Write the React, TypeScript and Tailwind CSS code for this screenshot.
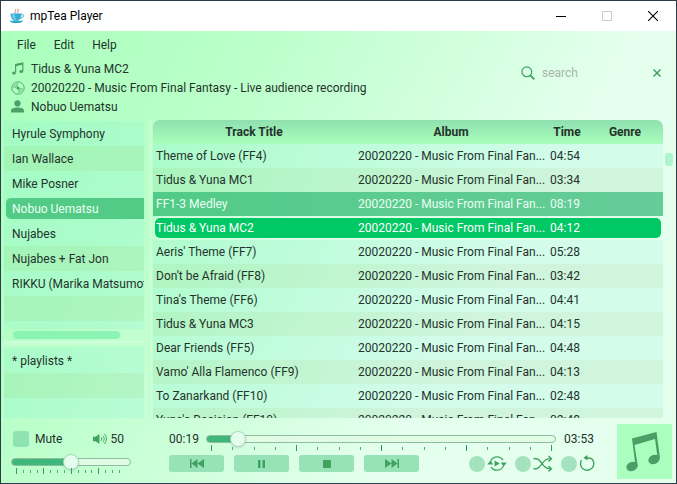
import React from "react";

const artists = [
  "Hyrule Symphony",
  "Ian Wallace",
  "Mike Posner",
  "Nobuo Uematsu",
  "Nujabes",
  "Nujabes + Fat Jon",
  "RIKKU (Marika Matsumoto)",
];

const album = "20020220 - Music From Final Fantasy - Live audience recording";
const shortAlbum = "20020220 - Music From Final Fan...";

const tracks = [
  { title: "Theme of Love (FF4)", time: "04:54" },
  { title: "Tidus & Yuna MC1", time: "03:34" },
  { title: "FF1-3 Medley", time: "08:19" },
  { title: "Tidus & Yuna MC2", time: "04:12" },
  { title: "Aeris' Theme (FF7)", time: "05:28" },
  { title: "Don't be Afraid (FF8)", time: "03:42" },
  { title: "Tina's Theme (FF6)", time: "04:41" },
  { title: "Tidus & Yuna MC3", time: "04:15" },
  { title: "Dear Friends (FF5)", time: "04:48" },
  { title: "Vamo' Alla Flamenco (FF9)", time: "04:13" },
  { title: "To Zanarkand (FF10)", time: "02:48" },
  { title: "Yuna's Decision (FF10)", time: "02:48" },
];

const selected = 2;
const playing = 3;

const light = "bg-[rgba(105,235,220,0.15)]";
const dark = "bg-[rgba(96,190,130,0.16)]";

function NoteIcon() {
  return (
    <svg viewBox="0 0 13 13" className="size-[13px]" fill="none" stroke="currentColor">
      <path d="M4.6 10.6V2.6L11.8 1v8.2" strokeWidth="1.2" />
      <path d="M4.6 3.4 11.8 1.8" strokeWidth="1.6" />
      <ellipse cx="2.9" cy="10.9" rx="1.9" ry="1.5" fill="currentColor" stroke="none" />
      <ellipse cx="10.2" cy="9.5" rx="1.9" ry="1.5" fill="currentColor" stroke="none" />
    </svg>
  );
}

function DiscIcon() {
  return (
    <svg viewBox="0 0 14 14" className="size-3.5" fill="none" stroke="currentColor">
      <circle cx="7" cy="7" r="6.2" strokeWidth="0.9" />
      <circle cx="7" cy="7" r="1.5" fill="currentColor" stroke="none" />
      <path
        d="M2.8 7A4.2 4.2 0 0 1 7 2.8M11.2 7A4.2 4.2 0 0 1 7 11.2M4.6 7A2.4 2.400 0 0 1 7 4.600M9.400 7A2.400 2.400 0 0 1 7 9.400"
        strokeWidth="0.8"
      />
    </svg>
  );
}

function PersonIcon() {
  return (
    <svg viewBox="0 0 13 13" className="size-[13px]" fill="currentColor">
      <circle cx="6.5" cy="3.4" r="3.1" />
      <path d="M0 12.6v-2.2C0 8.7 3 7.6 6.5 7.6S13 8.7 13 10.4v2.2z" />
    </svg>
  );
}

function CupIcon() {
  return (
    <svg viewBox="0 0 16 16" className="h-4 w-4">
      <path d="M6.4 5.4C5 3.8 7.6 3 6.6 1.2M8.8 5.4C7.8 4 10 3.2 8.9 0.8" fill="none" stroke="#c9827a" strokeWidth="1" />
      <path d="M1.6 5.4h11c0 4-1.6 7.4-5.5 7.4S1.6 9.4 1.6 5.4z" fill="#33aed4" />
      <path d="M3 6.4h3c0 2.6.4 4.2 1.5 5.4C4.400 11.6 3.2 9.6 3 6.4z" fill="#79d0e8" />
      <path d="M12.4 6.3c2.8-.6 3.6 3.3-1.2 4" fill="none" stroke="#5fa9b8" strokeWidth="1" />
      <path d="M0.5 12.7h13.8c-1 1.6-3 2.3-6.9 2.3s-5.900-.7-6.900-2.300z" fill="#2fa3cc" />
    </svg>
  );
}

function SpeakerIcon() {
  return (
    <svg viewBox="0 0 14 12" className="h-3 w-3.5" fill="none" stroke="currentColor">
      <path d="M0 3.8h2.6L6.4 1v10L2.6 8.2H0z" fill="currentColor" stroke="none" />
      <path d="M8 4.200c1 1 1 2.600 0 3.600M9.700 2.600c2 2 2 4.800 0 6.800M11.300 1c2.900 2.800 2.900 7.200 0 10" strokeWidth="1" />
    </svg>
  );
}

function Ticks({ count, className }: { count: number; className: string }) {
  return (
    <div className={`flex h-1.5 items-center justify-between ${className}`}>
      {Array.from({ length: count }, (_, i) => (
        <span
          key={i}
          className={i % 4 === 0 ? "h-1.5 w-px bg-[#2f9d5c]" : "h-[3px] w-px bg-[#4fae78]"}
        />
      ))}
    </div>
  );
}

function Slider({ label, value, fill }: { label: string; value: number; fill: number }) {
  return (
    <input
      type="range"
      aria-label={label}
      min={0}
      max={100}
      step="any"
      defaultValue={value}
      style={{
        backgroundImage: `linear-gradient(to right, #3fb67a ${fill}%, #e2fbe4 ${fill}%)`,
      }}
      className="block h-2 w-full appearance-none rounded-full border border-[#8cbf9f] [&::-webkit-slider-thumb]:size-4 [&::-webkit-slider-thumb]:appearance-none [&::-webkit-slider-thumb]:rounded-full [&::-webkit-slider-thumb]:border [&::-webkit-slider-thumb]:border-[#a5dcbc] [&::-webkit-slider-thumb]:bg-[#e4fdec] [&::-webkit-slider-thumb]:shadow-sm"
    />
  );
}

function TransportButton({ label, children }: { label: string; children: React.ReactNode }) {
  return (
    <button
      aria-label={label}
      className="flex h-[17px] w-[55px] items-center justify-center rounded-[3px] bg-[#98e2b8] text-[#3fa35f]"
    >
      {children}
    </button>
  );
}

function Mode({ label, children }: { label: string; children: React.ReactNode }) {
  return (
    <label className="flex items-center gap-0.5 text-[#3fa35f]">
      <input
        type="checkbox"
        aria-label={label}
        className="size-4 appearance-none rounded-full bg-[#a5e3c0]"
      />
      {children}
    </label>
  );
}

function TitleBar() {
  return (
    <header className="flex h-[30px] shrink-0 items-center bg-white pl-2 text-black">
      <CupIcon />
      <span className="flex-1 pl-[5px]">mpTea Player</span>
      <button aria-label="Minimize" className="flex w-[46px] justify-center">
        <svg viewBox="0 0 10 10" className="size-2.5" stroke="#000" shapeRendering="crispEdges">
          <path d="M0 5.5h10" />
        </svg>
      </button>
      <button aria-label="Maximize" className="flex w-[46px] justify-center">
        <svg viewBox="0 0 10 10" className="size-2.5" fill="none" stroke="#c8c8c8">
          <path d="M.5.5h9v9h-9z" />
        </svg>
      </button>
      <button aria-label="Close" className="flex w-[46px] justify-center">
        <svg viewBox="0 0 10 10" className="size-2.5" stroke="#000" strokeWidth="1.1">
          <path d="M0 0l10 10M10 0L0 10" />
        </svg>
      </button>
    </header>
  );
}

function NowPlaying() {
  return (
    <section className="flex shrink-0 items-start justify-between pb-1 pl-2.5 pr-[15px]">
      <ul>
        <li className="flex h-[19px] items-center">
          <span className="flex w-5 text-[#4aa167]"><NoteIcon /></span>
          Tidus &amp; Yuna MC2
        </li>
        <li className="flex h-[19px] items-center">
          <span className="flex w-5 text-[#4aa167]"><DiscIcon /></span>
          {album}
        </li>
        <li className="flex h-[19px] items-center">
          <span className="flex w-5 text-[#4aa167]"><PersonIcon /></span>
          Nobuo Uematsu
        </li>
      </ul>
      <div className="flex h-7 items-center text-[#3fa35f]">
        <svg viewBox="0 0 14 14" className="size-3.5" fill="none" stroke="currentColor">
          <circle cx="5.8" cy="5.8" r="4.9" strokeWidth="1.2" />
          <path d="M9.3 9.3l4 4" strokeWidth="1.8" />
        </svg>
        <input
          aria-label="Search"
          placeholder="search"
          className="ml-[7px] w-[111px] bg-transparent outline-none placeholder:text-[#a9b5ac]"
        />
        <button aria-label="Clear search">
          <svg viewBox="0 0 8 8" className="size-2" stroke="currentColor" strokeWidth="1.5">
            <path d="M.5.5l7 7M7.5.5l-7 7" />
          </svg>
        </button>
      </div>
    </section>
  );
}

function Sidebar() {
  return (
    <aside className="flex w-[140px] shrink-0 flex-col pt-px">
      <ul className="h-52 shrink-0 overflow-hidden whitespace-nowrap">
        {artists.map((name, i) =>
          name === "Nobuo Uematsu" ? (
            <li key={name} className={`h-[25px] py-0.5 pl-0.5 ${light}`}>
              <div className="flex h-[21px] items-center rounded-l-[5px] bg-[#52cb87] pl-1.5 text-[#eafff2]">
                {name}
              </div>
            </li>
          ) : (
            <li key={name} className={`flex h-[25px] items-center pl-2 ${i % 2 ? dark : light}`}>
              {name}
            </li>
          ),
        )}
        <li className={`h-[25px] ${dark}`} />
        <li className={`h-[25px] ${light}`} />
      </ul>
      <div className="h-3 shrink-0 pl-[9px] pt-0.5">
        <div className="h-2 w-[107px] rounded bg-[#8bf4b4]" />
      </div>
      <div className="h-[7px] shrink-0 bg-linear-to-b from-[#d2ffdc] to-[#b2ffc6]" />
      <ul className="flex-1 overflow-hidden">
        <li className={`flex h-[25px] items-center pl-2 ${light}`}>* playlists *</li>
        <li className={`h-[25px] ${dark}`} />
        <li className={`h-full ${light}`} />
      </ul>
    </aside>
  );
}

function TrackTable() {
  return (
    <div className="min-w-0 flex-1 overflow-hidden rounded-t-[7px]">
      <table className="w-full table-fixed border-separate border-spacing-0 whitespace-nowrap">
        <colgroup>
          <col className="w-[202px]" />
          <col className="w-48" />
          <col className="w-10" />
          <col />
        </colgroup>
        <thead>
          <tr className="h-6 bg-linear-to-b from-[#8fe0ae] to-[#a8ffbc]">
            <th className="p-0">Track Title</th>
            <th className="p-0">Album</th>
            <th className="p-0">Time</th>
            <th className="p-0">Genre</th>
          </tr>
        </thead>
        <tbody>
          {tracks.map((t, i) => {
            const now = i === playing;
            const row = now
              ? "bg-[rgba(225,255,240,0.5)] text-white"
              : i === selected
                ? "bg-linear-to-r from-[#52cb87] to-[#66cc99] text-[#eafff2]"
                : i % 2
                  ? dark
                  : light;
            const cell = now
              ? "border-y-2 border-transparent bg-[#00c864] bg-clip-padding py-0 pr-0"
              : "py-0 pr-0";
            return (
              <tr key={t.title} className={`h-6 ${row}`}>
                <td className={now ? `${cell} rounded-l-[7px] border-l-2 pl-px` : `${cell} pl-[3px]`}>{t.title}</td>
                <td className={`${cell} pl-[3px]`}>{shortAlbum}</td>
                <td className={`${cell} pl-[3px]`}>{t.time}</td>
                <td className={now ? `${cell} rounded-r-[7px] border-r-2` : cell} />
              </tr>
            );
          })}
        </tbody>
      </table>
    </div>
  );
}

function PlayerBar() {
  return (
    <footer className="flex h-[65px] shrink-0 items-start pr-1">
      <div className="w-[130px] shrink-0 pl-2.5 pt-3">
        <div className="flex h-[18px] items-center">
          <label className="flex items-center gap-1.5 pl-0.5">
            <input type="checkbox" className="size-4 appearance-none rounded-[3px] bg-[#8fe3b0]" />
            Mute
          </label>
          <span className="ml-auto mr-1 text-[#3fa35f]"><SpeakerIcon /></span>
          <span className="mr-[7px]">50</span>
        </div>
        <div className="pt-2.5">
          <Slider label="Volume" value={50} fill={50} />
          <Ticks count={16} className="ml-[5px] mr-[11px] mt-0.5" />
        </div>
      </div>
      <div className="ml-[38px] min-w-0 flex-1 pt-3">
        <div className="flex h-[18px] items-center">
          <span className="w-[37px]">00:19</span>
          <div className="flex-1">
            <Slider label="Position" value={7} fill={8} />
          </div>
          <span className="w-[61px] pl-2">03:53</span>
        </div>
        <div className="-mt-[3px] pl-[42px] pr-[65px]">
          <Ticks count={17} className="" />
        </div>
        <div className="flex items-center pt-1">
          <div className="flex gap-2.5">
            <TransportButton label="Previous">
              <svg viewBox="0 0 14 9" className="h-[9px] w-3.5" fill="currentColor">
                <path d="M0 0h1.5v9H0zM7.5 0v9l-6-4.5zM14 0v9L7.5 4.5z" />
              </svg>
            </TransportButton>
            <TransportButton label="Pause">
              <svg viewBox="0 0 7 8" className="h-2 w-[7px]" fill="currentColor">
                <path d="M0 0h2.5v8H0zM4.5 0H7v8H4.5z" />
              </svg>
            </TransportButton>
            <TransportButton label="Stop">
              <svg viewBox="0 0 8 8" className="size-2" fill="currentColor">
                <rect width="8" height="8" rx="1" />
              </svg>
            </TransportButton>
            <TransportButton label="Next">
              <svg viewBox="0 0 14 9" className="h-[9px] w-3.5" fill="currentColor">
                <path d="M14 0h-1.5v9H14zM6.5 0v9l6-4.5zM0 0v9l6.5-4.5z" />
              </svg>
            </TransportButton>
          </div>
          <div className="ml-auto mr-[22px] flex gap-2">
            <Mode label="Auto play">
              <svg viewBox="0 0 20 17" className="h-[17px] w-5" fill="none" stroke="currentColor">
                <path d="M3.6 6.400A6.900 6.900 0 0 1 16 5.200M16.400 10.600A6.900 6.900 0 0 1 4 11.800" strokeWidth="1.3" />
                <path d="M7.5 5.500v6l5.300-3zM.3 9.600h6L3.300 5.600zM13.700 7.400h6l-3 4z" fill="currentColor" stroke="none" />
              </svg>
            </Mode>
            <Mode label="Shuffle">
              <svg viewBox="0 0 20 17" className="h-[17px] w-5" fill="none" stroke="currentColor" strokeWidth="1.3">
                <path d="M.5 3.5c5 0 6 1.700 8.500 5s4 5.300 9 5.300M.5 14c5 0 6-2 8.500-5.200S13 3.700 18 3.700" />
                <path d="M15.500 1l3 2.700-3 2.700M15.500 11.100l3 2.700-3 2.700" />
              </svg>
            </Mode>
            <Mode label="Repeat">
              <svg viewBox="0 0 16 17" className="h-[17px] w-4" fill="none" stroke="currentColor" strokeWidth="1.4">
                <path d="M2.500 5A6.700 6.700 0 1 0 13.500 4.500C12 3.100 10.500 2.800 6.500 2.800" />
                <path d="M8.500 0v5.600L4.300 2.800z" fill="currentColor" stroke="none" />
              </svg>
            </Mode>
          </div>
        </div>
      </div>
      <div className="mt-1.5 shrink-0 bg-[#aaffbf] text-[#4a9e66]">
        <svg viewBox="0 0 55 55" className="size-[55px]" fill="currentColor">
          <path d="M15 14.500 39.500 8 43 34l-2.200 1.500L38 15l-20.500 6L20.800 42l-2.200 1z" />
          <ellipse cx="15" cy="42.500" rx="5.800" ry="4.500" transform="rotate(-20 15 42.500)" />
          <ellipse cx="37" cy="35.500" rx="5.800" ry="4.500" transform="rotate(-20 37 35.500)" />
        </svg>
      </div>
    </footer>
  );
}

export default function App() {
  return (
    <div className="flex h-screen flex-col overflow-hidden border border-[#2b3d4c] font-['Roboto','Open_Sans',sans-serif] text-[12px] leading-4 text-[#24332b]">
      <TitleBar />
      <main className="flex min-h-0 flex-1 flex-col bg-[linear-gradient(121deg,#aaffbb_0%,#b8ffc8_25%,#e5ffee_68%)]">
        <nav className="flex h-7 shrink-0 items-center gap-[18px] pl-4">
          <button>File</button>
          <button>Edit</button>
          <button>Help</button>
        </nav>
        <NowPlaying />
        <div className="flex min-h-0 flex-1 pl-[3px]">
          <Sidebar />
          <div className="w-[9px] shrink-0 pl-1 pr-px">
            <div className="h-full rounded-sm bg-linear-to-r from-[#b8ffc8] to-[#d2ffdc]" />
          </div>
          <TrackTable />
          <div className="w-[13px] shrink-0 pl-0.5 pt-[33px]">
            <div className="h-[13px] w-2 rounded-[3px] bg-[#aef5cd]" />
          </div>
        </div>
        <PlayerBar />
      </main>
    </div>
  );
}
